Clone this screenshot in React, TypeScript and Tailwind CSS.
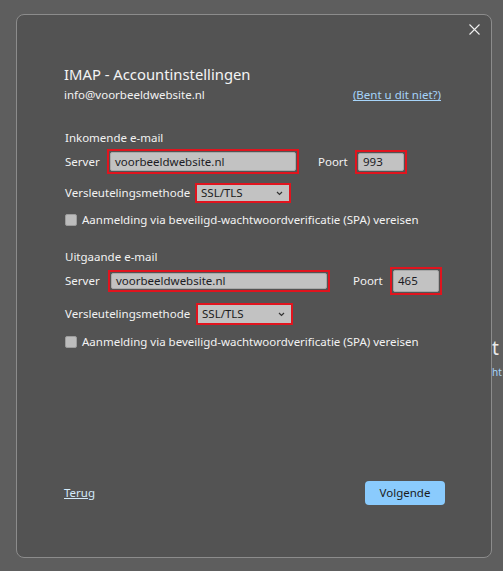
import React from 'react';

const font = { fontFamily: '"Noto Sans", "Open Sans", sans-serif' };

function Field({ value, width, height = 'h-[25px]' }: { value: string; width: string; height?: string }) {
  return (
    <div className={`border-2 border-[#e0141e] p-[1px] ${width} ${height} flex`}>
      <div className="flex-1 rounded-[2px] bg-[#c2c2c2] border border-[#a8a8a8] flex items-center pl-[4px] text-[11.5px] text-[#1c1c24]">
        {value}
      </div>
    </div>
  );
}

function Select({ width, height }: { width: string; height: string }) {
  return (
    <div className={`border-2 border-[#e0141e] ${width} ${height} flex`}>
      <div className="flex-1 bg-[#c2c2c2] flex items-center justify-between pl-[4px] pr-[6px] text-[11.5px] text-[#1c1c1c]">
        <span>SSL/TLS</span>
        <svg width="7" height="5" viewBox="0 0 7 5" fill="none" stroke="#333" strokeWidth="1.2">
          <path d="M1 1l2.5 2.5L6 1" />
        </svg>
      </div>
    </div>
  );
}

function Check({ label }: { label: string }) {
  return (
    <div className="flex items-center gap-[5px] h-[16px] text-[11.5px] text-[#f2f2f2]">
      <span className="w-[12px] h-[12px] ml-[1px] rounded-[2px] bg-[#bcbcbc] border border-[#9c9c9c]" />
      <span>{label}</span>
    </div>
  );
}

export default function App() {
  return (
    <div className="relative w-[503px] h-[571px] bg-[#5e5e5e] overflow-hidden" style={font}>
      {/* page behind the dialog */}
      <span className="absolute left-[492px] top-[336px] text-[19px] leading-[24px] text-[#eaeaea]">t</span>
      <span className="absolute left-[492px] top-[365px] text-[10px] leading-[14px] text-[#a6d4fa]">ht</span>

      <div className="absolute left-[16px] top-[14px] w-[476px] h-[544px] rounded-[8px] border border-[#8c8c8c] bg-[#535353] flex flex-col pl-[47px] pr-[49px]">
        <button className="absolute right-[10px] top-[8px] w-[12px] h-[12px] text-[#f0f0f0]" aria-label="Close">
          <svg width="11" height="11" viewBox="0 0 11 11" stroke="currentColor" strokeWidth="1.1">
            <path d="M0.5 0.5l10 10M10.5 0.5l-10 10" />
          </svg>
        </button>

        <h1 className="mt-[49px] text-[14.8px] leading-[20px] text-[#f4f4f4]">IMAP - Accountinstellingen</h1>
        <div className="mt-[3px] flex justify-between items-center h-[16px] text-[11.5px]">
          <span className="text-[#f2f2f2]">info@voorbeeldwebsite.nl</span>
          <a className="text-[#a6d4fa] underline mr-[1px]">(Bent u dit niet?)</a>
        </div>

        <div className="mt-[26px] h-[16px] text-[11.5px] text-[#f2f2f2] pl-[1px]">Inkomende e-mail</div>
        <div className="mt-[4px] flex items-center h-[25px] text-[11.5px] text-[#f2f2f2] pl-[1px]">
          <span className="w-[42px]">Server</span>
          <Field value="voorbeeldwebsite.nl" width="w-[192px]" />
          <span className="ml-[19px] w-[37px]">Poort</span>
          <Field value="993" width="w-[52px]" height="h-[24px]" />
        </div>
        <div className="mt-[9px] flex items-center h-[20px] text-[11.5px] text-[#f2f2f2] pl-[1px]">
          <span className="w-[130px]">Versleutelingsmethode</span>
          <Select width="w-[96px]" height="h-[20px]" />
        </div>
        <div className="mt-[9px]">
          <Check label="Aanmelding via beveiligd-wachtwoordverificatie (SPA) vereisen" />
        </div>

        <div className="mt-[20px] h-[16px] text-[11.5px] text-[#f2f2f2] pl-[1px]">Uitgaande e-mail</div>
        <div className="mt-[3px] flex items-center h-[28px] text-[11.5px] text-[#f2f2f2] pl-[1px]">
          <span className="w-[43px]">Server</span>
          <Field value="voorbeeldwebsite.nl" width="w-[222px]" height="h-[22px]" />
          <span className="ml-[23px] w-[37px]">Poort</span>
          <Field value="465" width="w-[52px]" height="h-[28px]" />
        </div>
        <div className="mt-[8px] flex items-center h-[22px] text-[11.5px] text-[#f2f2f2] pl-[1px]">
          <span className="w-[131px]">Versleutelingsmethode</span>
          <Select width="w-[97px]" height="h-[22px]" />
        </div>
        <div className="mt-[9px]">
          <Check label="Aanmelding via beveiligd-wachtwoordverificatie (SPA) vereisen" />
        </div>

        <div className="mt-auto mb-[52px] flex items-center justify-between">
          <a className="text-[11.5px] text-[#d4ebfb] underline">Terug</a>
          <button className="w-[80px] h-[24px] rounded-[4px] bg-[#8acbfd] text-[11.5px] text-[#1b1b1b] mr-[-3px]">Volgende</button>
        </div>
      </div>
    </div>
  );
}
